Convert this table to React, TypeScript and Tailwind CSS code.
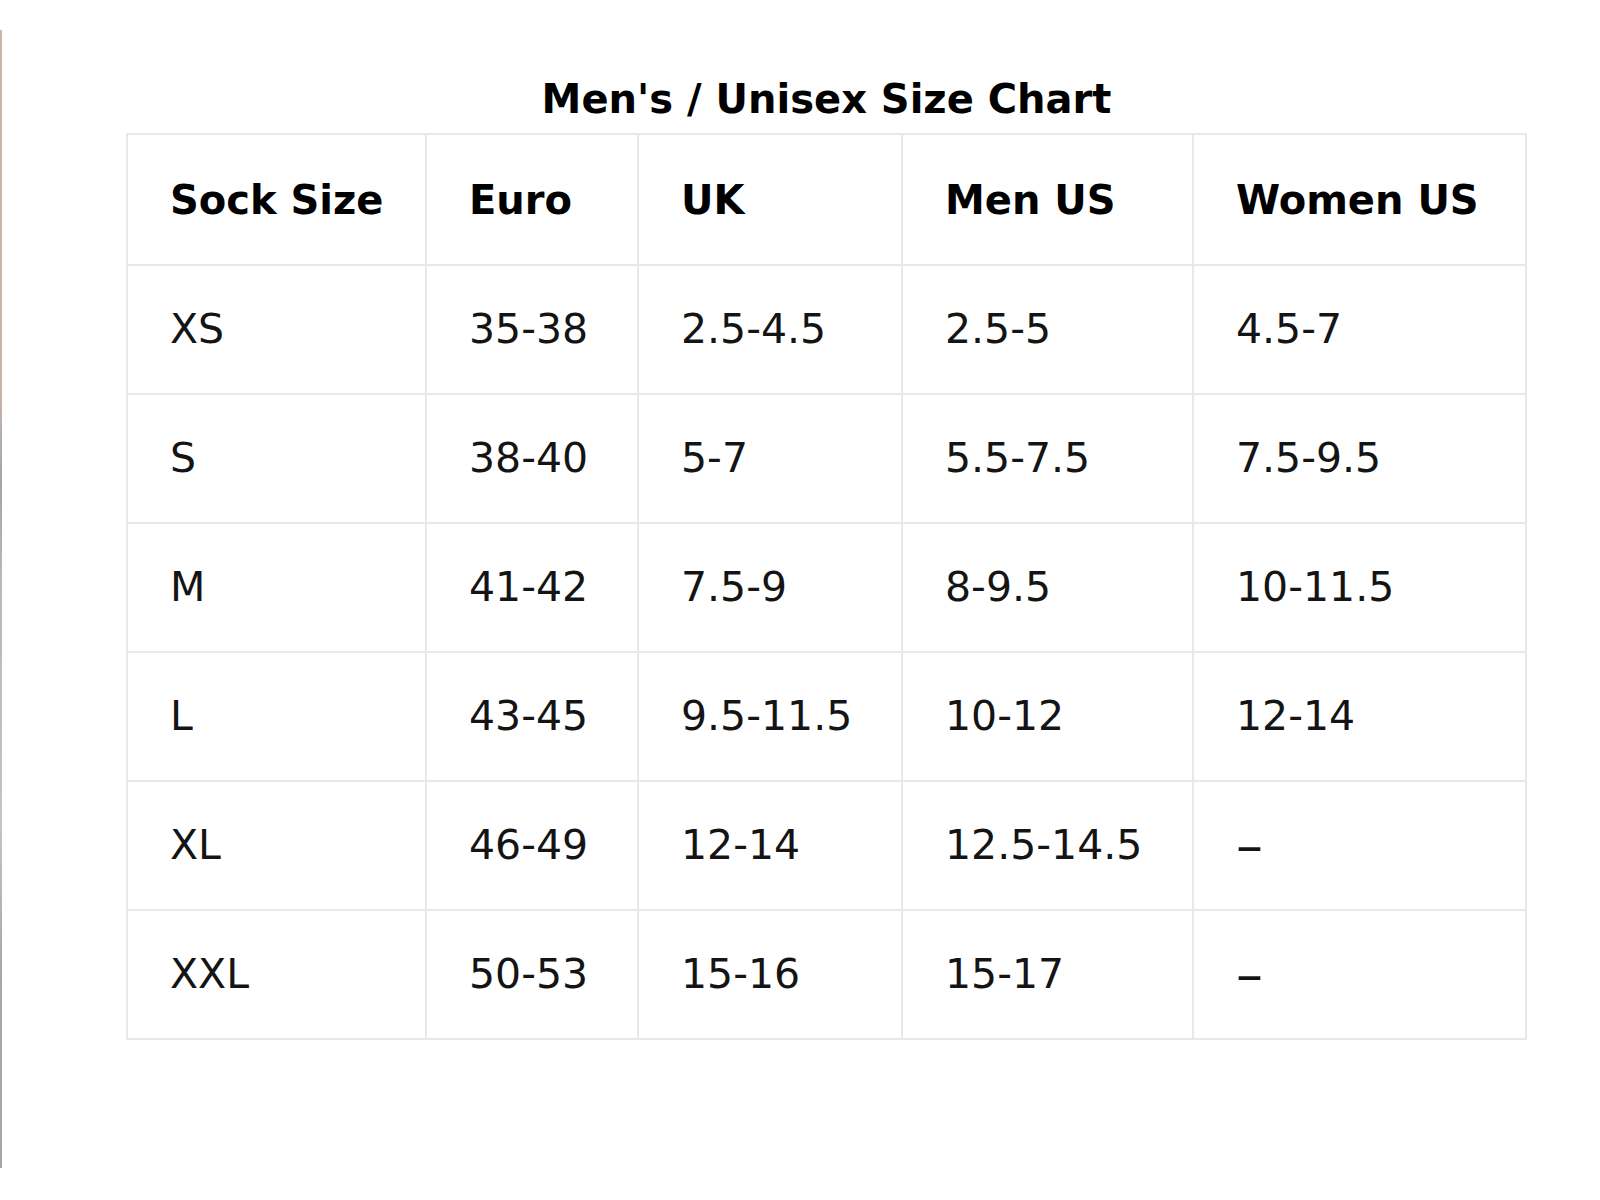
import React from "react";

const headers = ["Sock Size", "Euro", "UK", "Men US", "Women US"];

const rows: string[][] = [
  ["XS", "35-38", "2.5-4.5", "2.5-5", "4.5-7"],
  ["S", "38-40", "5-7", "5.5-7.5", "7.5-9.5"],
  ["M", "41-42", "7.5-9", "8-9.5", "10-11.5"],
  ["L", "43-45", "9.5-11.5", "10-12", "12-14"],
  ["XL", "46-49", "12-14", "12.5-14.5", "–"],
  ["XXL", "50-53", "15-16", "15-17", "–"],
];

const SizeChart: React.FC = () => {
  return (
    <div className="ml-[124px] w-[1401px] pt-[80px]">
      {/* Заголовок */}
      <h1 className="mb-[15px] text-center text-[40px] font-bold leading-[38px] text-black">
        Men's / Unisex Size Chart
      </h1>

      {/* Таблица размеров */}
      <div className="grid grid-cols-[299px_212px_264px_291px_333px] border-t-2 border-l-2 border-[#e8e8e8]">
        {headers.map((h) => (
          <div
            key={h}
            className="flex h-[131px] items-center border-r-2 border-b-2 border-[#e8e8e8] pl-[42px] text-[40px] font-bold text-black"
          >
            {h}
          </div>
        ))}
        {rows.map((row, i) =>
          row.map((cell, j) => (
            <div
              key={`${i}-${j}`}
              className="flex h-[129px] items-center border-r-2 border-b-2 border-[#e8e8e8] pl-[42px] text-[41px] text-[#141414]"
            >
              {cell === "–" ? <span className="text-[54px]">–</span> : cell}
            </div>
          ))
        )}
      </div>
    </div>
  );
};

export default function App() {
  return (
    <div className="flex min-h-[1200px] bg-white font-['DejaVu_Sans',sans-serif]">
      {/* полоска по левому краю */}
      <div className="mt-[30px] h-[1138px] w-[2px] shrink-0 bg-[linear-gradient(to_bottom,#cdb6ae_0%,#c9b2a8_32%,#b9b0ad_35%,#a4a4aa_40%,#b8b8bc_48%,#c4c4c8_70%,#a9a9a9_82%,#a6a6a6_100%)]" />
      <SizeChart />
    </div>
  );
}
